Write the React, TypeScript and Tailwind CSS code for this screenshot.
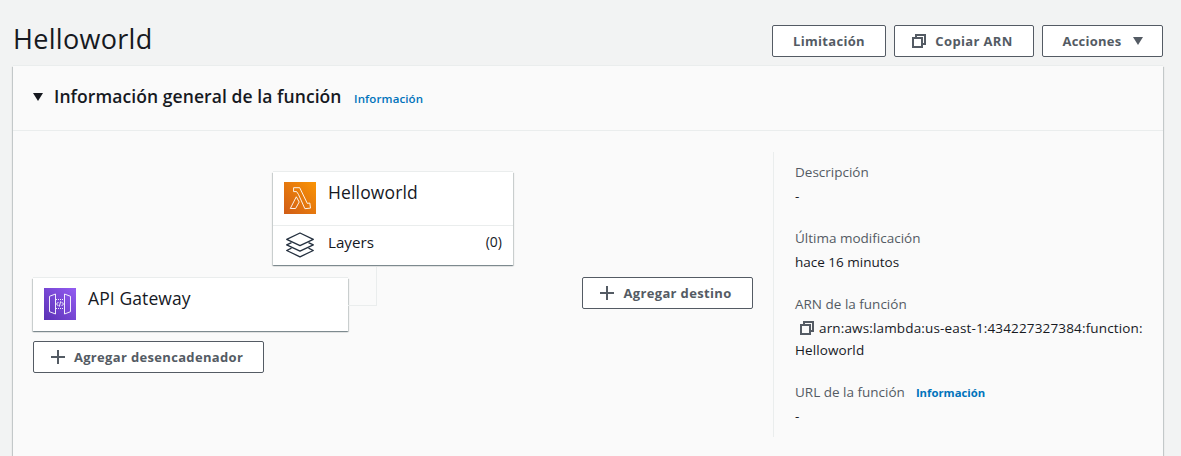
import type { ReactNode } from 'react';

const cardShadow =
  'bg-white shadow-[0_1px_1px_0_rgba(0,28,36,0.3),1px_1px_1px_0_rgba(0,28,36,0.15),-1px_1px_1px_0_rgba(0,28,36,0.15),0_-1px_0_0_#eaeded]';

function CopyIcon({ className = '' }: { className?: string }) {
  return (
    <svg viewBox="0 0 14 14" className={`h-[14px] w-[14px] shrink-0 ${className}`} fill="none" stroke="#545b64" strokeWidth="2">
      <path d="M1 4h9v9H1z" />
      <path d="M4 3V1h9v9h-2" />
    </svg>
  );
}

function PlusIcon() {
  return (
    <svg viewBox="0 0 14 14" className="h-[14px] w-[14px] shrink-0" fill="none" stroke="#545b64" strokeWidth="2">
      <path d="M7 0v14M0 7h14" />
    </svg>
  );
}

function Caret({ className = '' }: { className?: string }) {
  return (
    <svg viewBox="0 0 10 8" className={`h-[8px] w-[10px] shrink-0 ${className}`} fill="currentColor">
      <path d="M0 0h10L5 8z" />
    </svg>
  );
}

function LambdaIcon() {
  return (
    <svg viewBox="0 0 32 32" className="h-8 w-8 shrink-0">
      <defs>
        <linearGradient id="lambda" x1="0" y1="1" x2="1" y2="0">
          <stop offset="0" stopColor="#d05c17" />
          <stop offset="1" stopColor="#fa9404" />
        </linearGradient>
      </defs>
      <path fill="url(#lambda)" d="M0 0h32v32H0z" />
      <path
        fill="none"
        stroke="#fff"
        strokeWidth="0.9"
        strokeLinejoin="round"
        d="M9.6 5.7h6.1l7.6 15.7 2.5-.4.7 5.1-5.6.6-6.4-14.2-1.9-2.9H9.6zM12.3 14.8l2.9 5.2-3.6 6.5H6.3z"
      />
    </svg>
  );
}

function GatewayIcon() {
  return (
    <svg viewBox="0 0 32 32" className="h-8 w-8 shrink-0">
      <defs>
        <linearGradient id="gateway" x1="0" y1="1" x2="1" y2="0">
          <stop offset="0" stopColor="#5a30b5" />
          <stop offset="1" stopColor="#945df2" />
        </linearGradient>
      </defs>
      <path fill="url(#gateway)" d="M0 0h32v32H0z" />
      <g fill="none" stroke="#fff" strokeWidth="0.9">
        <path d="M5.5 8.3 11.5 6v20l-6-2.3zM26.5 8.3 20.5 6v20l6-2.3z" />
        <path strokeDasharray="1 1" d="M12 11.5h8M12 20.5h8" />
        <path d="m14.4 14-1.9 2 1.9 2M17.6 14l1.9 2-1.9 2M16.7 13.3l-1.4 5.4" />
      </g>
    </svg>
  );
}

function LayersIcon() {
  return (
    <svg viewBox="0 0 28 26" className="h-[26px] w-[28px] shrink-0" fill="none" stroke="#232f3e" strokeWidth="1.3" strokeLinejoin="round">
      <path d="M14 1 27.3 7.3 14 13.6.7 7.3z" />
      <path d="M5.5 10.6.7 12.9 14 19.2l13.3-6.3-4.8-2.3" />
      <path d="M5.5 16.2.7 18.5 14 24.8l13.3-6.3-4.8-2.3" />
    </svg>
  );
}

function Button({ className, children }: { className: string; children: ReactNode }) {
  return (
    <button
      className={`flex h-8 shrink-0 items-center justify-center whitespace-nowrap rounded-[2px] border border-[#545b64] bg-white text-[13px] font-bold leading-5 text-[#545b64] ${className}`}
    >
      {children}
    </button>
  );
}

function Field({ label, info, children }: { label: string; info?: boolean; children: ReactNode }) {
  return (
    <div className="flex flex-col gap-[2px]">
      <dt className="flex h-[22px] items-center text-[#545b64]">
        {label}
        {info && <a className="ml-[11px] mt-px text-[11.3px] font-bold text-[#0073bb]">Información</a>}
      </dt>
      <dd>{children}</dd>
    </div>
  );
}

export default function App() {
  return (
    <div className="h-[456px] overflow-hidden bg-[#f2f3f3] font-['Open_Sans',sans-serif] text-[#16191f]">
      <header className="flex h-[66px] justify-between pl-[13px] pr-[18px]">
        <h1 className="mt-[21px] text-[27px] leading-9 tracking-[0.3px]">Helloworld</h1>
        <div className="mt-[25px] flex gap-2">
          <Button className="w-[114px] tracking-[0.3px]">Limitación</Button>
          <Button className="w-[140px] gap-[9px] pr-[3px] tracking-[0.35px]">
            <CopyIcon />
            Copiar ARN
          </Button>
          <Button className="w-[121px] gap-[11px] tracking-[0.25px]">
            Acciones
            <Caret />
          </Button>
        </div>
      </header>

      <section className="ml-[13px] mr-[18px] h-[420px] bg-[#fafafa] shadow-[0_1px_1px_0_rgba(0,28,36,0.3),1px_1px_1px_0_rgba(0,28,36,0.15),-1px_1px_1px_0_rgba(0,28,36,0.15),0_-1px_0_0_#eaeded]">
        <div className="flex h-[65px] items-center border-b border-[#eaeded] pb-[2px] pl-5">
          <Caret />
          <h2 className="mb-[2px] ml-[11px] w-[287px] whitespace-nowrap text-[17.5px] font-semibold leading-6 tracking-[0.08px]">
            Información general de la función
          </h2>
          <a className="ml-[13px] mt-[3px] text-[11.5px] font-semibold tracking-[0.12px] text-[#0073bb]">Información</a>
        </div>

        <div className="flex pl-5">
          <div className="w-[740px] pt-[41px]">
            <div className={`ml-[240px] flex h-[93px] w-[240px] flex-col ${cardShadow}`}>
              <div className="flex h-[54px] border-b border-[#eaeded] pl-[11px] pt-[10px]">
                <LambdaIcon />
                <span className="-mt-px ml-3 text-[17.5px] leading-[22px] tracking-[0.15px]">Helloworld</span>
              </div>
              <div className="flex flex-1 pl-[13px] pr-[11px] pt-[6px]">
                <LayersIcon />
                <span className="-mt-px ml-[14px] flex-1 text-[15.2px] leading-[22px]">Layers</span>
                <span className="-mt-px text-[14px] leading-[22px]">(0)</span>
              </div>
            </div>
            <div className="mt-3 flex">
              <div className="w-[315px] pt-px">
                <div className={`flex h-[53px] pl-[11px] pt-[10px] ${cardShadow}`}>
                  <GatewayIcon />
                  <span className="-mt-px ml-3 text-[17.5px] leading-[22px] tracking-[0.1px]">API Gateway</span>
                </div>
                <Button className="mt-[10px] w-[231px] gap-[9px] pr-[3px] tracking-[0.33px]">
                  <PlusIcon />
                  Agregar desencadenador
                </Button>
              </div>
              <div className="-mt-[10px] h-[39px] w-[29px] border-b border-r border-[#eaeded]" />
              <Button className="ml-[205px] w-[171px] gap-[9px] pr-[3px] tracking-[0.35px]">
                <PlusIcon />
                Agregar destino
              </Button>
            </div>
          </div>

          <dl className="mt-[21px] flex h-[285px] w-[385px] flex-col gap-5 border-l border-[#eaeded] pl-[21px] pt-[9px] text-[13.5px] leading-[22px]">
            <Field label="Descripción">-</Field>
            <Field label="Última modificación">hace 16 minutos</Field>
            <Field label="ARN de la función">
              <span className="flex items-center whitespace-nowrap pl-[5px] tracking-[0.15px]">
                <CopyIcon className="mr-[5px]" />
                arn:aws:lambda:us-east-1:434227327384:function:
              </span>
              <span className="tracking-[0.1px]">Helloworld</span>
            </Field>
            <Field label="URL de la función" info>
              -
            </Field>
          </dl>
        </div>
      </section>
    </div>
  );
}
